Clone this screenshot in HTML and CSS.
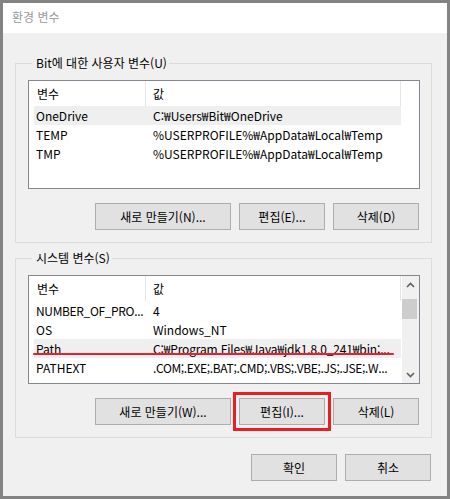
FILE: index.html
```html
<!DOCTYPE html>
<html lang="ko">
<head>
<meta charset="utf-8">
<title>환경 변수</title>
<link rel="stylesheet" href="styles.css">
</head>
<body>
<div class="window">
  <div class="titlebar">환경 변수</div>
  <div class="content">
    <fieldset class="group">
      <legend>Bit에 대한 사용자 변수(U)</legend>
      <div class="list">
        <div class="list-main">
          <div class="head"><span class="c1">변수</span><span class="c2">값</span></div>
          <div class="row sel"><span class="c1">OneDrive</span><span class="c2">C:₩Users₩Bit₩OneDrive</span></div>
          <div class="row"><span class="c1">TEMP</span><span class="c2">%USERPROFILE%₩AppData₩Local₩Temp</span></div>
          <div class="row"><span class="c1">TMP</span><span class="c2">%USERPROFILE%₩AppData₩Local₩Temp</span></div>
        </div>
        <div class="scroll-space"></div>
      </div>
      <div class="buttons">
        <button class="btn wide">새로 만들기(N)...</button>
        <button class="btn">편집(E)...</button>
        <button class="btn">삭제(D)</button>
      </div>
    </fieldset>

    <fieldset class="group second">
      <legend>시스템 변수(S)</legend>
      <div class="list">
        <div class="list-main">
          <div class="head"><span class="c1">변수</span><span class="c2">값</span></div>
          <div class="row"><span class="c1 tight">NUMBER_OF_PRO...</span><span class="c2">4</span></div>
          <div class="row"><span class="c1">OS</span><span class="c2">Windows_NT</span></div>
          <div class="row sel marked"><span class="c1">Path</span><span class="c2 snug">C:₩Program Files₩Java₩jdk1.8.0_241₩bin;...</span><span class="underline"></span></div>
          <div class="row"><span class="c1">PATHEXT</span><span class="c2 tight">.COM;.EXE;.BAT;.CMD;.VBS;.VBE;.JS;.JSE;.W...</span></div>
        </div>
        <div class="scrollbar">
          <div class="arrow">
            <svg width="9" height="6" viewBox="0 0 9 6"><polyline points="1,5 4.5,1.5 8,5" fill="none" stroke="#606060" stroke-width="1.6"/></svg>
          </div>
          <div class="track"><div class="thumb"></div></div>
          <div class="arrow">
            <svg width="9" height="6" viewBox="0 0 9 6"><polyline points="1,1 4.5,4.5 8,1" fill="none" stroke="#606060" stroke-width="1.6"/></svg>
          </div>
        </div>
      </div>
      <div class="buttons">
        <button class="btn wide">새로 만들기(W)...</button>
        <button class="btn highlighted">편집(I)...</button>
        <button class="btn">삭제(L)</button>
      </div>
    </fieldset>

    <div class="dialog-buttons">
      <button class="btn">확인</button>
      <button class="btn">취소</button>
    </div>
  </div>
</div>
</body>
</html>
```

FILE: styles.css
```css
* {
  box-sizing: border-box;
}

html, body {
  margin: 0;
  padding: 0;
}

body {
  font-family: "Noto Sans CJK KR", sans-serif;
  font-size: 12px;
  color: #000;
}

.window {
  width: 450px;
  height: 499px;
  border: 3px solid #838383;
  background: #f0f0f0;
  display: flex;
  flex-direction: column;
}

.titlebar {
  height: 30px;
  line-height: 28px;
  background: #fff;
  color: #9a9a9a;
  padding-left: 9px;
}

.content {
  flex: 1;
  display: flex;
  flex-direction: column;
}

.group {
  margin: 22px 15px 0 12px;
  padding: 9px 11px 12px 12px;
  border: 1px solid #dcdcdc;
  min-width: 0;
}

.group.second {
  margin-top: 7px;
}

.group legend {
  margin-left: 4px;
  padding: 0 2px 0 4px;
  line-height: 16px;
}

.list {
  height: 109px;
  border: 1px solid #828790;
  background: #fff;
  display: flex;
  overflow: hidden;
}

.list-main {
  flex: 1;
  min-width: 0;
  display: flex;
  flex-direction: column;
}

.head {
  height: 25px;
  width: 372px;
  display: flex;
  align-items: stretch;
  border-right: 1px solid #e5e5e5;
}

.head .c1 {
  width: 117px;
  padding-left: 8px;
  border-right: 1px solid #e5e5e5;
  display: flex;
  align-items: center;
}

.head .c2 {
  padding-left: 7px;
  display: flex;
  align-items: center;
}

.row {
  position: relative;
  height: 19px;
  margin: 0 1px 0 5px;
  display: flex;
  align-items: center;
  white-space: nowrap;
}

.row.sel {
  background: #efefef;
}

.row .c1 {
  width: 112px;
  flex: none;
  padding-left: 2px;
  overflow: hidden;
}

.row .c2 {
  padding-left: 7px;
  overflow: hidden;
}

.tight {
  letter-spacing: -0.35px;
}

.snug {
  letter-spacing: -0.15px;
}

.underline {
  position: absolute;
  left: -1px;
  top: 14px;
  width: 361px;
  height: 2px;
  background: #e8202e;
  border-radius: 1px;
}

.scroll-space {
  width: 17px;
}

.scrollbar {
  width: 17px;
  background: #f0f0f0;
  display: flex;
  flex-direction: column;
}

.arrow {
  height: 17px;
  display: flex;
  align-items: center;
  justify-content: center;
}

.track {
  flex: 1;
  padding-top: 6px;
}

.thumb {
  height: 20px;
  margin: 0 2px 0 0;
  background: #cdcdcd;
}

.buttons {
  margin-top: 14px;
  display: flex;
  justify-content: flex-end;
  gap: 8px;
  padding-right: 1px;
}

.btn {
  width: 86px;
  height: 27px;
  padding: 0;
  border: 1px solid #adadad;
  background: #e1e1e1;
  color: #000;
  font-family: "Noto Sans CJK KR", sans-serif;
  font-size: 12px;
}

.btn.wide {
  width: 136px;
}

.btn.highlighted {
  outline: 3px solid #ec1c24;
  outline-offset: 3px;
}

.dialog-buttons {
  margin: 16px 16px 0 0;
  display: flex;
  justify-content: flex-end;
  gap: 8px;
}
```
